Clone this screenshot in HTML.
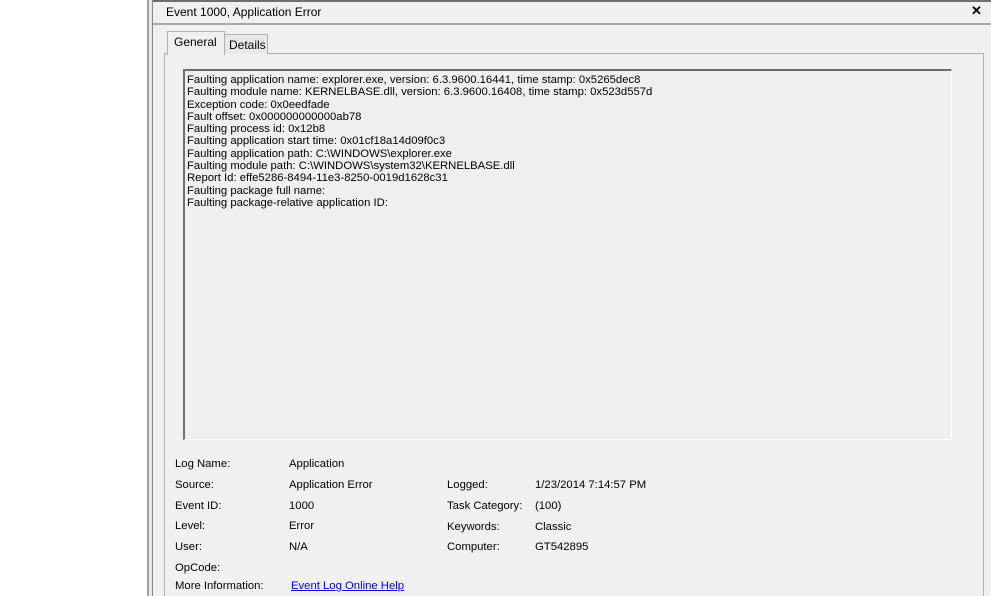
<!DOCTYPE html>
<html><head><style>
html,body{margin:0;padding:0;overflow:hidden}
#w{width:991px;height:596px;background:#fff;position:relative;overflow:hidden;font-family:"Liberation Sans",sans-serif;font-size:11.5px;color:#000}
.a{position:absolute}
.t{font-size:11.3px}
</style></head><body><div id="w">
<div class="a" style="left:147px;top:0;width:2px;height:596px;background:#a0a0a0"></div>
<div class="a" style="left:149px;top:0;width:3px;height:596px;background:#e8e8e8"></div>
<div class="a" style="left:152px;top:0;width:1px;height:596px;background:#8a8a8a"></div>
<div class="a" style="left:153px;top:0;width:838px;height:596px;background:#f0f0f0"></div>
<div class="a" style="left:153px;top:0;width:838px;height:2px;background:#707070"></div>
<div class="a" style="left:166px;top:5px;font-size:12px">Event 1000, Application Error</div>
<div class="a" style="left:971px;top:3px;font-weight:bold;font-size:13px">✕</div>
<div class="a" style="left:153px;top:23px;width:838px;height:2px;background:#a8a8a8"></div>
<div class="a" style="left:164px;top:53px;width:818px;height:543px;border:1px solid #b0b0b0;border-bottom:none;background:#f0f0f0"></div>
<div class="a" style="left:224px;top:34px;width:42px;height:19px;border:1px solid #b0b0b0;border-bottom:none;background:#e8e8e8"></div>
<div class="a" style="left:229px;top:38px;font-size:12px">Details</div>
<div class="a" style="left:167px;top:31px;width:56px;height:23px;border:1px solid #b0b0b0;border-bottom:none;background:#f0f0f0"></div>
<div class="a" style="left:174px;top:35px;font-size:12px">General</div>
<div class="a" style="left:183px;top:69px;width:766px;height:368px;border-top:2px solid #6e6e6e;border-left:2px solid #6e6e6e;border-right:1px solid #fff;border-bottom:1px solid #fff;background:#efefef"></div>
<div class="a t" style="left:187px;top:74px;line-height:12.3px">
Faulting application name: explorer.exe, version: 6.3.9600.16441, time stamp: 0x5265dec8<br>
Faulting module name: KERNELBASE.dll, version: 6.3.9600.16408, time stamp: 0x523d557d<br>
Exception code: 0x0eedfade<br>
Fault offset: 0x000000000000ab78<br>
Faulting process id: 0x12b8<br>
Faulting application start time: 0x01cf18a14d09f0c3<br>
Faulting application path: C:\WINDOWS\explorer.exe<br>
Faulting module path: C:\WINDOWS\system32\KERNELBASE.dll<br>
Report Id: effe5286-8494-11e3-8250-0019d1628c31<br>
Faulting package full name: <br>
Faulting package-relative application ID:
</div>
<div class="a t" style="left:175px;top:454px;line-height:20.8px">Log Name:<br>Source:<br>Event ID:<br>Level:<br>User:<br>OpCode:</div>
<div class="a t" style="left:175px;top:579px;line-height:14px">More Information:</div>
<div class="a t" style="left:289px;top:454px;line-height:20.8px">Application<br>Application Error<br>1000<br>Error<br>N/A</div>
<div class="a t" style="left:291px;top:579px;line-height:14px;color:#0000ee;text-decoration:underline">Event Log Online Help</div>
<div class="a t" style="left:447px;top:475px;line-height:20.8px">Logged:<br>Task Category:<br>Keywords:<br>Computer:</div>
<div class="a t" style="left:535px;top:475px;line-height:20.8px">1/23/2014 7:14:57 PM<br>(100)<br>Classic<br>GT542895</div>
</div></body></html>
